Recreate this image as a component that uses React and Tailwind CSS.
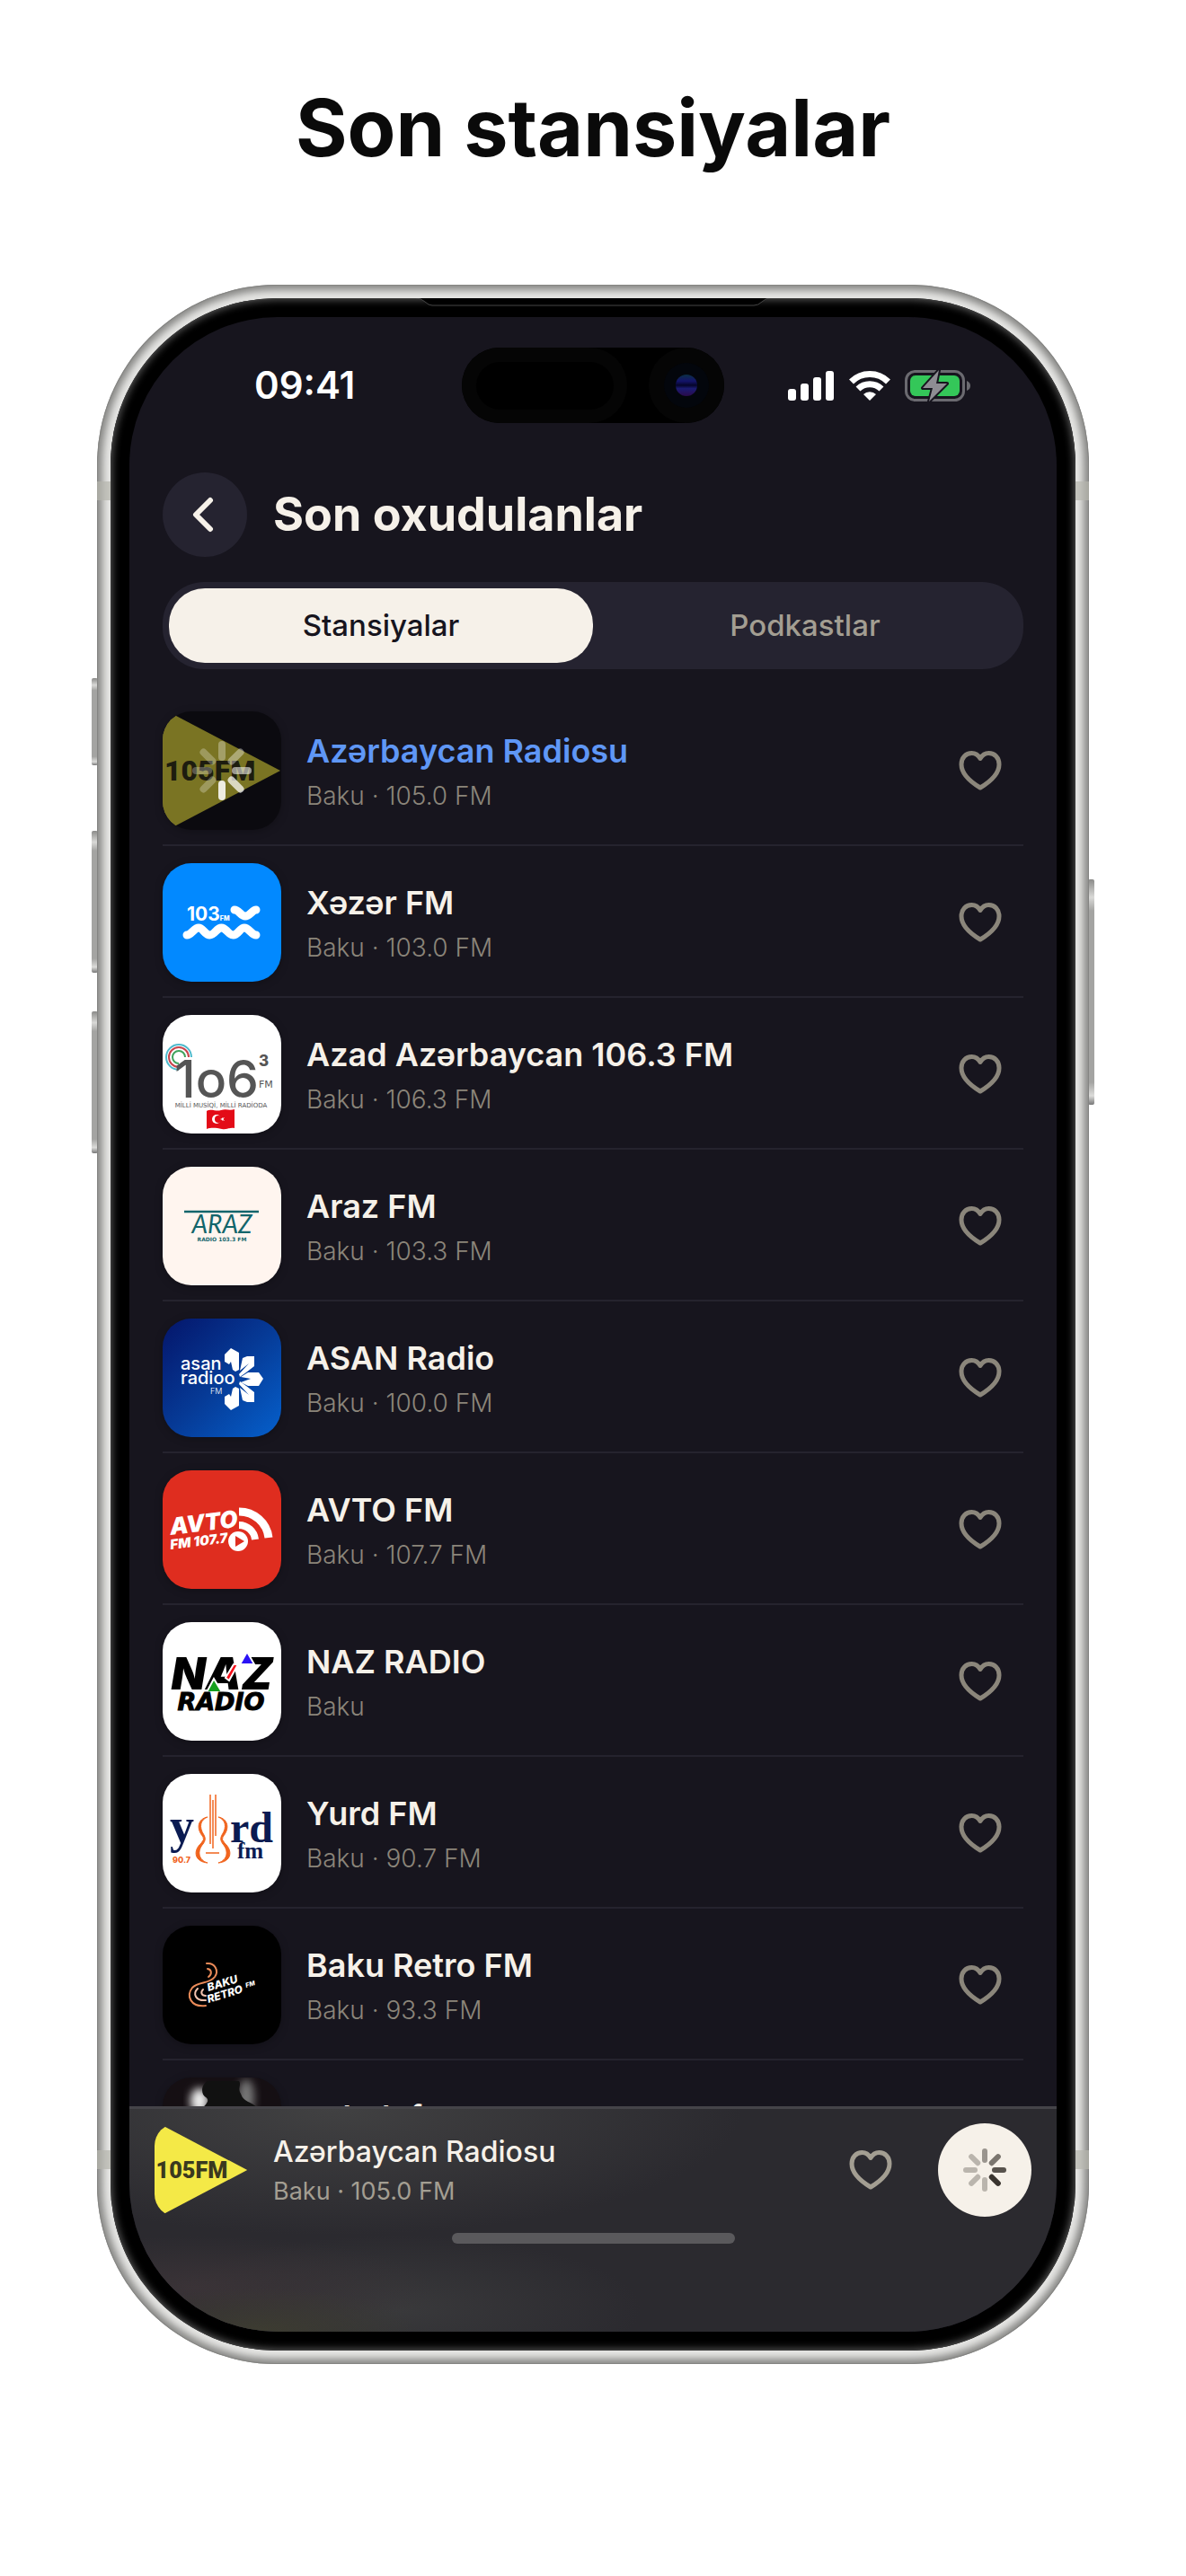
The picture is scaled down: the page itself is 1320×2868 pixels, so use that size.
import React from "react";

function Spinner({ className, inner, outer, width, colors }) {
  return (
    <svg viewBox="-36 -36 72 72" className={className} aria-hidden="true">
      {colors.map((c, i) => (
        <line
          key={i}
          x1="0"
          y1={-inner}
          x2="0"
          y2={-outer}
          stroke={c}
          strokeWidth={width}
          strokeLinecap="round"
          transform={`rotate(${i * 45})`}
        />
      ))}
    </svg>
  );
}

function Heart({ className }) {
  return (
    <svg viewBox="0 0 48 46" className={className} fill="none" stroke="currentColor" strokeWidth="5" strokeLinejoin="round" aria-hidden="true">
      <path d="M24 42C14 36 3 27 3 16C3 8.500 8 3.500 14.500 3.500C19 3.500 22 6 24 9.500C26 6 29 3.500 33.500 3.500C40 3.500 45 8.500 45 16C45 27 34 36 24 42Z" />
    </svg>
  );
}

function Logo({ label, bg, children }) {
  return (
    <svg viewBox="0 0 132 132" role="img" aria-label={label} className="block size-full" style={{ background: bg }}>
      {children}
    </svg>
  );
}

function Logo105() {
  return (
    <Logo label="105 FM">
      <path d="M-4 -5L131 66L-4 137Z" fill="#f4e947" />
      <text x="2" y="77" fontFamily="Roboto" fontWeight="900" fontSize="32" fill="#3a391f">105FM</text>
    </Logo>
  );
}

function Logo103() {
  return (
    <Logo label="103 FM" bg="#0289ff">
      <text x="27" y="64" fontFamily="Inter" fontWeight="700" fontSize="21" fill="#fff">
        103<tspan fontSize="7" fontWeight="800">FM</tspan>
      </text>
      <g fill="none" stroke="#fff" strokeWidth="9" strokeLinecap="round">
        <path d="M80 52C85 52 87 59 92 59S100 52 104 52" />
        <path d="M27 80C32 80 35 72 40 72S47 80 52.500 80S60 72 65.500 72S73 80 78.500 80S86 72 91 72S99 80 104 80" />
      </g>
    </Logo>
  );
}

function Logo106() {
  return (
    <Logo label="106.3 FM" bg="#fff">
      <g fill="none" strokeWidth="2">
        <path d="M32 47A14 14 0 1 0 18 61" stroke="#4db9cc" />
        <path d="M29 47A11 11 0 1 0 18 58" stroke="#c8444c" />
        <path d="M25 47A7 7 0 1 0 18 54" stroke="#3fa35c" />
      </g>
      <text x="13" y="92" fontFamily="Inter" fontSize="57" fontWeight="500" fill="#555">1o6</text>
      <text x="107" y="57" fontFamily="Inter" fontSize="17" fontWeight="800" fill="#555">3</text>
      <text x="107" y="81" fontFamily="DejaVu Sans" fontSize="11" fill="#555" stroke="#fff" strokeWidth="3" paintOrder="stroke">FM</text>
      <text x="65" y="103" textAnchor="middle" fontFamily="DejaVu Sans" fontSize="7" fill="#555">MİLLİ MUSİQİ, MİLLİ RADİODA</text>
      <path d="M49 107C55 104 59 108 65 106S75 107 80 105V126C74 125 72 128 66 127S55 125 49 127Z" fill="#e30b17" />
      <circle cx="60" cy="116" r="5" fill="#fff" />
      <circle cx="62" cy="116" r="4" fill="#e30b17" />
      <path d="M64 116L69 114L66 118V114L69 118Z" fill="#fff" />
    </Logo>
  );
}

function LogoAraz() {
  return (
    <Logo label="Araz" bg="#fff5ef">
      <path d="M24 50H107" stroke="#12656b" strokeWidth="2.500" />
      <g fill="#12656b" textAnchor="middle">
        <text x="66" y="74" fontSize="28" fontStyle="italic" fontWeight="400" fontFamily="Lato">ARAZ</text>
        <text x="66" y="83" fontFamily="DejaVu Sans" fontSize="6" fontWeight="700">RADIO 103.3 FM</text>
      </g>
    </Logo>
  );
}

function LogoAsan() {
  const half = (
    <>
      <path d="M69 40L76 33L85 38V57L81 59L78 57L76 48L74 51L69 48Z" />
      <path d="M89 44L94 42H102V53L93 60L86 65L85 62L96 50L86 58Z" />
    </>
  );
  return (
    <Logo label="ASAN Radio" bg="linear-gradient(135deg,#04156a 0%,#063a96 50%,#0560cc 100%)">
      <g fill="#fff" fontFamily="Inter">
        <text x="20" y="57" fontSize="20" fontWeight="500">asan</text>
        <text x="20" y="73" fontSize="20" fontWeight="500">radioo</text>
        <text x="53" y="84" fontSize="9" fontWeight="300">FM</text>
      </g>
      <g fill="#fff">
        {half}
        <g transform="matrix(1 0 0 -1 0 135)">{half}</g>
        <path d="M87 65L95 60H107L112 67L107 75H95L87 71L98 67Z" />
      </g>
    </Logo>
  );
}

function LogoAvto() {
  return (
    <Logo label="AVTO FM" bg="#df2d1f">
      <g fill="#fff" fontFamily="Inter" fontWeight="900" fontStyle="italic">
        <text x="9" y="72" fontSize="26" transform="rotate(-7 9 72)">AVTO</text>
        <text x="9" y="88" fontSize="15" transform="rotate(-7 9 88)">FM 107.7</text>
      </g>
      <g fill="none" stroke="#fff">
        <path d="M85 46A33 33 0 0 1 118 75" strokeWidth="9" />
        <path d="M85 61A18 18 0 0 1 103 77" strokeWidth="8" />
      </g>
      <circle cx="84" cy="79" r="11" fill="#fff" />
      <path d="M81 73L91 79L81 85Z" fill="#df2d1f" />
    </Logo>
  );
}

function LogoNaz() {
  return (
    <Logo label="NAZ Radio" bg="#fff">
      <text x="66" y="75" textAnchor="middle" fontSize="50" fontFamily="Inter" fontWeight="900" fontStyle="italic">NAZ</text>
      <path d="M57 63L66 78H49Z" fill="#15a01e" stroke="#fff" strokeWidth="2" />
      <path d="M94 33L102 47H86Z" fill="#2a12f5" stroke="#fff" strokeWidth="2" />
      <path d="M79 47H84L74 65L70 62Z" fill="#f5101a" stroke="#fff" strokeWidth="2" />
      <text x="65" y="98" textAnchor="middle" fontSize="27" fontFamily="DejaVu Sans" fontWeight="700" fontStyle="italic" stroke="#000">RADIO</text>
    </Logo>
  );
}

function LogoYurd() {
  const side = (
    <path d="M50 48C39 50 37 61 45 70Q47 73 43 77C33 86 36 98 50 99C40 96 38 86 45 78Q49 73 46 68C40 59 42 51 50 48Z" />
  );
  return (
    <Logo label="Yurd FM" bg="#fff">
      <g fill="#0b1b52" fontFamily="Liberation Serif" fontWeight="700">
        <text x="8" y="76" fontSize="54">y</text>
        <text x="75" y="76" fontSize="48">rd</text>
        <text x="83" y="94" fontSize="25">fm</text>
      </g>
      <text x="11" y="99" fontFamily="Inter" fontSize="9" fontWeight="800" fill="#f0641e">90.7</text>
      <g fill="#f0641e" stroke="#f0641e">
        {side}
        <g transform="matrix(-1 0 0 1 112 0)">{side}</g>
        <path d="M53 23V78M59 23V69M56 29V83M48 88H63" strokeWidth="1.500" />
      </g>
    </Logo>
  );
}

function LogoRetro() {
  return (
    <Logo label="Baku Retro FM" bg="#000">
      <g fill="none" stroke="#ea8a58" strokeWidth="2" strokeLinecap="round">
        <path d="M49 42C58 41 63 50 58 57C52 65 40 62 33 69C26 78 31 91 48 89" />
        <path d="M50 48C55 49 55 54 51 57" />
        <path d="M48 83C37 84 33 76 39 70" stroke="#f4c3ae" />
        <path d="M48 78C43 78 42 74 45 71" stroke="#f4c3ae" />
      </g>
      <g fill="#fff" fontFamily="Inter" fontWeight="800" fontStyle="italic">
        <text x="51" y="73" fontSize="12" transform="rotate(-17 51 73)">BAKU</text>
        <text x="51" y="86" fontSize="12" transform="rotate(-17 51 86)">RETRO</text>
        <text x="93" y="69" fontSize="7" transform="rotate(-17 93 69)">FM</text>
      </g>
    </Logo>
  );
}

function LogoSabah() {
  return (
    <Logo label="Sabah" bg="#150f13">
      <defs>
        <filter id="soft"><feGaussianBlur stdDeviation="5" /></filter>
      </defs>
      <g filter="url(#soft)">
        <ellipse cx="41" cy="26" rx="10" ry="14" fill="#eee" />
        <ellipse cx="93" cy="22" rx="9" ry="20" fill="#777" />
      </g>
      <path d="M50 4C43 8 42 18 48 22C54 26 46 31 45 34H106C98 26 90 28 87 18C83 12 88 8 85 4Z" fill="#111" />
    </Logo>
  );
}

const stations = [
  { name: "Azərbaycan Radiosu", info: "Baku · 105.0 FM", logo: <Logo105 />, active: true },
  { name: "Xəzər FM", info: "Baku · 103.0 FM", logo: <Logo103 /> },
  { name: "Azad Azərbaycan 106.3 FM", info: "Baku · 106.3 FM", logo: <Logo106 /> },
  { name: "Araz FM", info: "Baku · 103.3 FM", logo: <LogoAraz /> },
  { name: "ASAN Radio", info: "Baku · 100.0 FM", logo: <LogoAsan /> },
  { name: "AVTO FM", info: "Baku · 107.7 FM", logo: <LogoAvto /> },
  { name: "NAZ RADIO", info: "Baku", logo: <LogoNaz /> },
  { name: "Yurd FM", info: "Baku · 90.7 FM", logo: <LogoYurd /> },
  { name: "Baku Retro FM", info: "Baku · 93.3 FM", logo: <LogoRetro /> },
  { name: "sabah fm", info: "Baku", logo: <LogoSabah /> },
];

function StationRow({ station }) {
  return (
    <li className="flex items-center border-b-2 border-[#25232e] pt-[19px] pb-4">
      <div className="relative size-[132px] shrink-0 overflow-hidden rounded-[32px] shadow-[0_2px_10px_rgba(0,0,0,0.25)]">
        {station.logo}
        {station.active && (
          <div className="absolute inset-0 flex items-center justify-center bg-black/50">
            <Spinner
              className="size-[72px]"
              inner={15}
              outer={29}
              width={8}
              colors={["#ffffff50", "#ffffff60", "#ffffff8c", "#ffffffb8", "#ffffffdd", "#ffffff44", "#ffffff44", "#ffffff44"]}
            />
          </div>
        )}
      </div>
      <div className="min-w-0 flex-1 pt-[6px] pl-7">
        <h3 className={station.active ? "truncate text-[36px] leading-[50px] font-semibold text-[#5f97f6]" : "truncate text-[36px] leading-[50px] font-semibold text-[#f6f1e9]"}>
          {station.name}
        </h3>
        <p className="text-[28px] leading-[50px] font-light text-[#8b857a]">{station.info}</p>
      </div>
      <button type="button" aria-label={`${station.name} sevimlilərə əlavə et`} className="mr-6 shrink-0 text-[#8b867b]">
        <Heart className="h-[46px] w-[48px]" />
      </button>
    </li>
  );
}

function StatusBar() {
  return (
    <div className="flex h-[84px] items-center justify-between pr-[95px] pl-[139px]">
      <time className="w-40 text-[42px] leading-[48px] font-semibold text-white">09:41</time>
      <div className="flex h-full w-[292px] items-center justify-between rounded-full bg-black">
        <div className="flex h-full w-[184px] items-center justify-center rounded-full bg-[#050505]">
          <div className="h-[53px] w-[153px] rounded-full bg-black" />
        </div>
        <div className="flex size-[84px] items-center justify-center rounded-full bg-[#050505]">
          <div className="flex size-[50px] items-center justify-center rounded-full bg-[#03060c]">
            <div className="size-6 rounded-full bg-[linear-gradient(180deg,#0b2f45_0,#14146a_30%,#05052a_50%,#1b1b72_65%,#2a0a4a_100%)]" />
          </div>
        </div>
      </div>
      <div className="flex w-[204px] items-center justify-between">
        <svg viewBox="0 0 51 33" className="h-[33px] w-[51px]" fill="#fff" aria-label="Siqnal">
          <rect x="0" y="20" width="9" height="13" rx="3" />
          <rect x="14" y="14" width="9" height="19" rx="3" />
          <rect x="28" y="7" width="9" height="26" rx="3" />
          <rect x="42" y="0" width="9" height="33" rx="3" />
        </svg>
        <svg viewBox="0 0 46 34" className="h-[34px] w-[46px]" aria-label="Wi-Fi">
          <g fill="none" stroke="#fff" strokeWidth="7">
            <path d="M2.500 13A29 29 0 0 1 43.500 13" />
            <path d="M10 21A18.500 18.500 0 0 1 36 21" />
          </g>
          <path d="M23 34L16 27A10 10 0 0 1 30 27Z" fill="#fff" />
        </svg>
        <svg viewBox="0 0 74 38" className="h-[38px] w-[74px]" aria-label="Batareya">
          <rect x="1.500" y="3.500" width="64" height="32" rx="10" fill="none" stroke="#6b6a70" strokeWidth="3" />
          <rect x="6" y="8" width="55" height="23" rx="6" fill="#34c759" />
          <path d="M69 14Q73 15.500 73 19.500T69 25Z" fill="#6b6a70" />
          <path d="M38 2L20 22H31L27 37L47 17H35Z" fill="#8e8d93" stroke="#17151e" strokeWidth="4" strokeLinejoin="round" paintOrder="stroke" />
        </svg>
      </div>
    </div>
  );
}

function Player() {
  return (
    <footer className="relative -mt-[118px] border-t-[3px] border-[#454449] bg-[#2b2a2f] bg-[radial-gradient(ellipse_at_14%_100%,#3d3c31_0,transparent_14%),radial-gradient(ellipse_at_7%_80%,#3a3337_0,transparent_20%),radial-gradient(ellipse_at_22%_0%,#414142_0,transparent_40%),radial-gradient(ellipse_at_29%_90%,#39393b_0,transparent_26%)] pb-[98px]">
      <div className="flex items-center pt-4 pr-7 pl-7">
        <div className="size-[104px] shrink-0 overflow-hidden rounded-[25px]">
          <Logo105 />
        </div>
        <div className="min-w-0 flex-1 pt-1 pl-7">
          <h2 className="truncate text-[32px] leading-[44px] font-medium text-[#f6f1e9]">Azərbaycan Radiosu</h2>
          <p className="text-[27px] leading-[44px] text-[#a39e92]">Baku · 105.0 FM</p>
        </div>
        <button type="button" aria-label="Sevimlilərə əlavə et" className="mr-[51px] shrink-0 text-[#a39e92]">
          <Heart className="h-[46px] w-[48px]" />
        </button>
        <button type="button" aria-label="Yüklənir" className="flex size-[104px] shrink-0 items-center justify-center rounded-full bg-[#f6f1e9]">
          <Spinner
            className="size-[72px]"
            inner={11}
            outer={21}
            width={6}
            colors={["#9a958e", "#7b766f", "#58534d", "#3a352f", "#bab5ad", "#bab5ad", "#bab5ad", "#bab5ad"]}
          />
        </button>
      </div>
      <div className="mx-auto mt-[18px] h-3 w-[315px] rounded-full bg-[#5a595c]" />
    </footer>
  );
}

function SideButton({ className }) {
  return (
    <div className={`absolute w-[7px] rounded-[2px] bg-[linear-gradient(180deg,#8b8b89_0,#d9d9d7_8%,#a4a4a2_14%,#a4a4a2_90%,#dcdcda_96%,#777_100%)] ${className}`} />
  );
}

function Phone() {
  return (
    <div className="relative mx-[108px]">
      <SideButton className="top-[438px] -left-[6px] h-[97px]" />
      <SideButton className="top-[608px] -left-[6px] h-[158px]" />
      <SideButton className="top-[809px] -left-[6px] h-[158px]" />
      <SideButton className="top-[662px] -right-[6px] h-[251px]" />
      <div className="relative overflow-hidden rounded-[200px] bg-[#e6e6e4] p-[15px] shadow-[inset_0_0_0_1px_#858583,inset_0_0_8px_6px_#868684]">
        <div className="absolute top-[219px] right-0 left-0 h-[21px] bg-[#b5b5ad]/70" />
        <div className="absolute right-0 bottom-[217px] left-0 h-[21px] bg-[#b5b5ad]/70" />
        <div className="relative rounded-[185px] bg-black p-[21px] shadow-[inset_0_0_0_1px_#3a3a3a,inset_0_0_9px_2px_#555]">
          <svg viewBox="0 0 394 9" className="absolute top-0 left-1/2 h-[9px] w-[394px] -translate-x-1/2" aria-hidden="true">
            <path d="M0 0Q6 0 10 4T18 8H376Q381 8 385 4T394 0Z" fill="#000" />
            <path d="M0 0Q6 0 10 4T18 8H376Q381 8 385 4T394 0" fill="none" stroke="#444" />
          </svg>
          <div className="overflow-hidden rounded-[165px] bg-[#17151e] pt-[34px]">
            <StatusBar />
            <div className="px-[37px]">
              <header className="mt-[55px] flex items-center gap-[29px]">
                <button type="button" aria-label="Geri" className="flex size-[94px] items-center justify-center rounded-full bg-[#252330]">
                  <svg viewBox="0 0 24 40" className="mr-1 h-10 w-6" fill="none" stroke="#f6f1e9" strokeWidth="6" strokeLinecap="round" strokeLinejoin="round">
                    <path d="M20 4L4 20L20 36" />
                  </svg>
                </button>
                <h2 className="text-[52px] leading-[60px] font-bold text-[#f6f1e9]">Son oxudulanlar</h2>
              </header>
              <div role="tablist" className="mt-7 flex rounded-[46px] bg-[#252330] p-[7px] text-[33px] leading-[83px] font-medium">
                <button type="button" role="tab" aria-selected="true" className="flex-1 rounded-[40px] bg-[#f6f1e9] text-[#17151e]">Stansiyalar</button>
                <button type="button" role="tab" aria-selected="false" className="flex-1 text-[#a39e92]">Podkastlar</button>
              </div>
              <ul className="mt-7">
                {stations.map((s) => (
                  <StationRow key={s.name} station={s} />
                ))}
              </ul>
            </div>
            <Player />
          </div>
        </div>
      </div>
    </div>
  );
}

export default function App() {
  return (
    <main className="min-h-screen bg-white pt-[92px] pb-[230px] font-['Inter',sans-serif]">
      <h1 className="mb-[125px] text-center text-[88px] leading-[100px] font-bold text-[#0a0a0a]">Son stansiyalar</h1>
      <Phone />
    </main>
  );
}
